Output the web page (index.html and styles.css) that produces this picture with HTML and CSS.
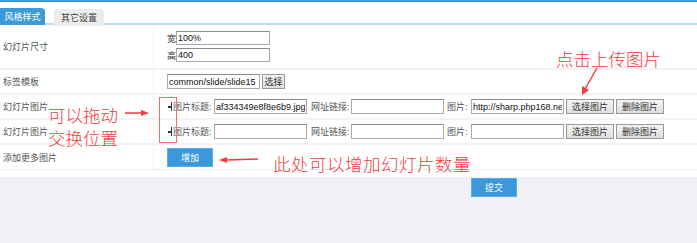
FILE: index.html
```html
<!doctype html>
<html lang="zh-CN">
  <head>
    <meta charset="UTF-8" />
    <title>幻灯片设置</title>
    <link rel="stylesheet" href="styles.css">
  </head>
  <body>
    <div class="page">
      <div class="topbar"></div>
      <div class="tabs">
        <span class="tab active">风格样式</span>
        <span class="tab">其它设置</span>
      </div>

      <div class="panel">
        <table class="form-table">
          <tr class="row-size">
            <td class="label">幻灯片尺寸</td>
            <td class="field">
              <div class="size-line">宽<input class="txt txt-size" type="text" value="100%"></div>
              <div class="size-line">高<input class="txt txt-size" type="text" value="400"></div>
            </td>
          </tr>
          <tr>
            <td class="label">标签模板</td>
            <td class="field">
              <input class="txt txt-tpl" type="text" value="common/slide/slide15"><button class="btn-gray btn-small">选择</button>
            </td>
          </tr>
          <tr>
            <td class="label">幻灯片图片</td>
            <td class="field">
              <div class="pic-row">
                <span class="handle"></span>
                <span class="cap">图片标题:</span><input class="txt txt-pic" type="text" value="af334349e8f8e6b9.jpg">
                <span class="cap cap-link">网址链接:</span><input class="txt txt-pic" type="text" value="">
                <span class="cap cap-img">图片:</span><input class="txt txt-pic" type="text" value="http://sharp.php168.net/attachment/slide.jpg">
                <button class="btn-gray btn-pic">选择图片</button><button class="btn-gray btn-pic">删除图片</button>
              </div>
            </td>
          </tr>
          <tr>
            <td class="label">幻灯片图片</td>
            <td class="field">
              <div class="pic-row">
                <span class="handle"></span>
                <span class="cap">图片标题:</span><input class="txt txt-pic" type="text" value="">
                <span class="cap cap-link">网址链接:</span><input class="txt txt-pic" type="text" value="">
                <span class="cap cap-img">图片:</span><input class="txt txt-pic" type="text" value="">
                <button class="btn-gray btn-pic">选择图片</button><button class="btn-gray btn-pic">删除图片</button>
              </div>
            </td>
          </tr>
          <tr class="row-add">
            <td class="label">添加更多图片</td>
            <td class="field"><button class="btn-blue">增加</button></td>
          </tr>
        </table>
      </div>

      <div class="footer">
        <button class="btn-blue btn-submit">提交</button>
      </div>

      <!-- annotations drawn over the screenshot -->
      <div class="note note-drag">可以拖动<br>交换位置</div>
      <div class="drag-box"></div>
      <div class="note note-upload">点击上传图片</div>
      <div class="note note-add">此处可以增加幻灯片数量</div>
      <svg class="arrows" width="697" height="243" viewBox="0 0 697 243">
        <g stroke="#f03c3c" stroke-width="1.5" fill="#f03c3c">
          <line x1="125" y1="113" x2="143" y2="113" />
          <polygon points="149,113 141,110 141,116" stroke="none" />
          <line x1="597" y1="68" x2="585" y2="89" />
          <polygon points="582,95 582,86 589,90" stroke="none" />
          <line x1="258" y1="159" x2="226" y2="160" />
          <polygon points="219,160 227,157 227,163" stroke="none" />
        </g>
      </svg>
    </div>
  </body>
</html>
```

FILE: styles.css
```css
body {
  margin: 0;
  font-family: "Liberation Sans", "Noto Sans CJK SC", sans-serif;
  font-size: 9px;
  color: #555;
  background: #f0f1f6;
}

.page {
  position: relative;
  width: 697px;
  height: 243px;
  overflow: hidden;
}

.topbar {
  height: 2px;
  background: #3c9ad8;
}

.tabs {
  display: flex;
  gap: 9px;
  height: 23px;
  padding-top: 6px;
  box-sizing: border-box;
  background: #fff;
  border-bottom: 2px solid #bcdcf2;
}

.tab {
  display: flex;
  align-items: center;
  justify-content: center;
  width: 50px;
  height: 17px;
  margin-top: 1px;
  background: #ececec;
  color: #444;
  border-radius: 3px 3px 0 0;
}

.tab.active {
  width: 45px;
  margin-top: 0;
  background: #3c9ad8;
  color: #fff;
  border-radius: 0 4px 0 0;
}

.panel {
  background: #fff;
  padding-bottom: 7px;
}

.form-table {
  width: 100%;
  border-collapse: collapse;
}

.form-table td {
  border-bottom: 2px solid #f3f3f3;
  padding: 0;
}

.form-table .label {
  width: 150px;
  padding-left: 3px;
  border-right: 1px solid #f3f3f3;
  color: #555;
}

.form-table .field {
  padding-left: 13px;
  height: 23px;
}

.row-size .field {
  height: 43px;
}

.row-add td {
  height: 24px;
  border-bottom: 1px solid #ececec;
}

.size-line {
  display: flex;
  align-items: center;
  height: 17px;
  color: #333;
}

.txt {
  box-sizing: border-box;
  height: 14px;
  padding: 0 1px;
  border: 1px solid #a9a9a9;
  border-top-color: #8a8a8a;
  font-family: "Liberation Sans", sans-serif;
  font-size: 9px;
  color: #111;
  background: #fff;
  outline: none;
}

.txt-size {
  width: 94px;
}

.txt-tpl {
  width: 93px;
  height: 15px;
}

.txt-pic {
  width: 93px;
  height: 15px;
}

.pic-row {
  display: flex;
  align-items: center;
}

.handle {
  position: relative;
  width: 6px;
  height: 9px;
}

.handle::before {
  content: "";
  position: absolute;
  left: 4px;
  top: 0;
  width: 1px;
  height: 9px;
  background: #333;
}

.handle::after {
  content: "";
  position: absolute;
  left: 1px;
  top: 4px;
  width: 3px;
  height: 2px;
  background: #333;
}

.cap {
  width: 41px;
  color: #555;
}

.cap-link {
  width: 40px;
  margin-left: 4px;
}

.cap-img {
  width: 24px;
  margin-left: 3px;
}

.btn-gray {
  box-sizing: border-box;
  height: 15px;
  padding: 0;
  border: 1px solid #999;
  background: linear-gradient(#f4f4f4, #dedede);
  font-family: "Liberation Sans", "Noto Sans CJK SC", sans-serif;
  font-size: 9px;
  color: #333;
}

.btn-small {
  width: 23px;
  margin-left: 2px;
}

.btn-pic {
  width: 48px;
  margin-left: 2px;
}

.btn-blue {
  box-sizing: border-box;
  width: 46px;
  height: 19px;
  padding: 0;
  border: 1px solid #5aaee6;
  background: #3a98db;
  color: #fff;
  font-family: "Liberation Sans", "Noto Sans CJK SC", sans-serif;
  font-size: 9px;
}

.footer {
  padding: 1px 0 0 471px;
}

.note {
  position: absolute;
  color: #f03c3c;
  font-family: "Noto Sans CJK SC", sans-serif;
  font-size: 17.5px;
  line-height: 23px;
  font-weight: 300;
}

.note-drag {
  left: 48px;
  top: 103px;
}

.note-upload {
  left: 556px;
  top: 47px;
}

.note-add {
  left: 273px;
  top: 152px;
  letter-spacing: 0.5px;
}

.drag-box {
  position: absolute;
  left: 159px;
  top: 97px;
  width: 16px;
  height: 44px;
  border: 1px solid #f07070;
}

.arrows {
  position: absolute;
  left: 0;
  top: 0;
}
```
